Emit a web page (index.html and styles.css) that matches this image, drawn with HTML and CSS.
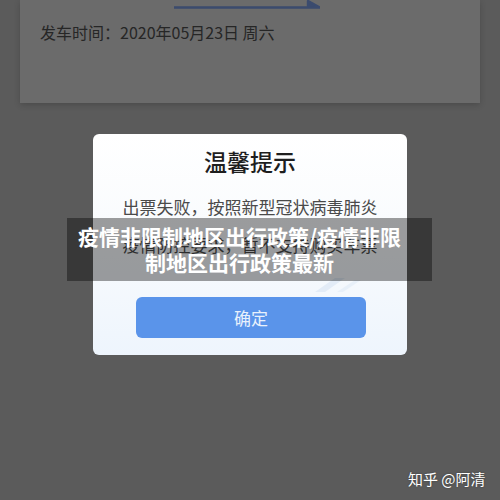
FILE: index.html
```html
<!DOCTYPE html>
<html lang="zh">
<head>
<meta charset="utf-8">
<link rel="stylesheet" href="styles.css">
</head>
<body>
<div class="screen">
  <div class="ticket">
    <svg class="route" width="146" height="10" viewBox="0 0 146 10">
      <path d="M0 7.5 H146 L134 1 V7.5" fill="#3b4b6e" stroke="#3b4b6e" stroke-width="2.4" stroke-linejoin="round"/>
    </svg>
    <div class="depart">发车时间：2020年05月23日 周六</div>
  </div>
  <div class="dialog">
    <div class="dlg-title">温馨提示</div>
    <div class="dlg-body">出票失败，按照新型冠状病毒肺炎<br>疫情防控要求，暂不支持购买车票</div>
    <svg class="swoosh" width="60" height="20" viewBox="0 0 60 20">
      <path d="M4 18 L24 4 L34 4 L14 18 Z" fill="#e3ecf7"/>
      <path d="M26 18 L44 6 L50 6 L32 18 Z" fill="#e8f0f9"/>
    </svg>
    <div class="dlg-btn">确定</div>
  </div>
  <div class="band">疫情非限制地区出行政策/疫情非限制地区出行政策最新</div>
  <div class="mark">知乎 @阿清</div>
</div>
</body>
</html>
```

FILE: styles.css
```css
* { box-sizing: border-box; }
html, body { margin: 0; padding: 0; }
body {
  width: 500px;
  height: 500px;
  overflow: hidden;
  background: #5b5b5b;
  font-family: "Noto Sans CJK SC", "Noto Sans", sans-serif;
}
.screen {
  position: relative;
  width: 500px;
  height: 500px;
  display: flex;
  flex-direction: column;
}
.ticket {
  margin: 0 20px;
  height: 103px;
  background: #6b6b6b;
  box-shadow: 0 2px 6px rgba(0,0,0,0.18);
  display: flex;
  flex-direction: column;
  padding: 0 0 0 20px;
}
.route {
  display: block;
  margin: 0 0 0 134px;
}
.depart {
  margin-top: 11px;
  font-size: 16px;
  line-height: 22px;
  color: #262626;
}
.dialog {
  position: relative;
  margin: 31px 0 0 93px;
  width: 314px;
  height: 221px;
  border-radius: 6px;
  background: linear-gradient(180deg, #ffffff 0%, #f7fafd 55%, #eef5fd 100%);
  display: flex;
  flex-direction: column;
  align-items: center;
  padding-top: 12px;
}
.dlg-title {
  font-size: 23px;
  line-height: 30px;
  font-weight: 500;
  color: #1e1e1e;
}
.dlg-body {
  margin-top: 12px;
  font-size: 17px;
  line-height: 38px;
  color: #4a4a4a;
  text-align: center;
}
.swoosh {
  position: absolute;
  right: 36px;
  top: 140px;
}
.dlg-btn {
  margin-top: 33px;
  margin-left: 2px;
  width: 230px;
  height: 41px;
  border-radius: 6px;
  background: #5a94ea;
  color: #e9f1fc;
  font-size: 17px;
  line-height: 41px;
  text-align: center;
}
.band {
  position: absolute;
  left: 67px;
  top: 218px;
  width: 365px;
  height: 63px;
  padding: 5px 26px 0 6px;
  background: rgba(0,0,0,0.38);
  color: #ffffff;
  font-size: 21px;
  line-height: 26px;
  font-weight: 700;
  text-align: center;
}
.mark {
  position: absolute;
  left: 408px;
  top: 468px;
  font-size: 15px;
  line-height: 22px;
  color: #ffffff;
  text-shadow: 0 0 2px rgba(0,0,0,0.4);
  white-space: nowrap;
}
```
